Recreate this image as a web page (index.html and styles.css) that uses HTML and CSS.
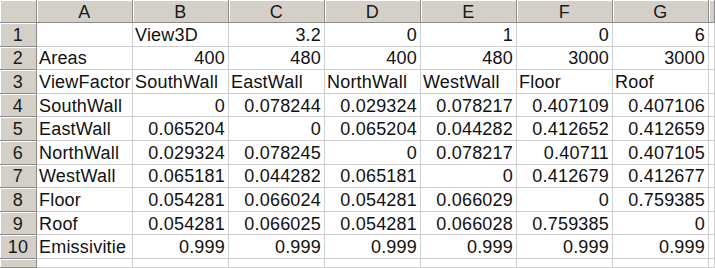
FILE: index.html
```html
<!DOCTYPE html>
<html>
<head>
<meta charset="utf-8">
<link rel="stylesheet" href="styles.css">
</head>
<body>
<div class="sheet">
  <div class="hd corner"></div>
  <div class="hd col">A</div><div class="hd col">B</div><div class="hd col">C</div><div class="hd col">D</div><div class="hd col">E</div><div class="hd col">F</div><div class="hd col">G</div><div class="hd col"></div>

  <div class="hd row">1</div>
  <div class="c t"></div><div class="c t">View3D</div><div class="c n">3.2</div><div class="c n">0</div><div class="c n">1</div><div class="c n">0</div><div class="c n">6</div><div class="c"></div>

  <div class="hd row">2</div>
  <div class="c t">Areas</div><div class="c n">400</div><div class="c n">480</div><div class="c n">400</div><div class="c n">480</div><div class="c n">3000</div><div class="c n">3000</div><div class="c"></div>

  <div class="hd row">3</div>
  <div class="c t">ViewFactor</div><div class="c t">SouthWall</div><div class="c t">EastWall</div><div class="c t">NorthWall</div><div class="c t">WestWall</div><div class="c t">Floor</div><div class="c t">Roof</div><div class="c"></div>

  <div class="hd row">4</div>
  <div class="c t">SouthWall</div><div class="c n">0</div><div class="c n">0.078244</div><div class="c n">0.029324</div><div class="c n">0.078217</div><div class="c n">0.407109</div><div class="c n">0.407106</div><div class="c"></div>

  <div class="hd row">5</div>
  <div class="c t">EastWall</div><div class="c n">0.065204</div><div class="c n">0</div><div class="c n">0.065204</div><div class="c n">0.044282</div><div class="c n">0.412652</div><div class="c n">0.412659</div><div class="c"></div>

  <div class="hd row">6</div>
  <div class="c t">NorthWall</div><div class="c n">0.029324</div><div class="c n">0.078245</div><div class="c n">0</div><div class="c n">0.078217</div><div class="c n">0.40711</div><div class="c n">0.407105</div><div class="c"></div>

  <div class="hd row">7</div>
  <div class="c t">WestWall</div><div class="c n">0.065181</div><div class="c n">0.044282</div><div class="c n">0.065181</div><div class="c n">0</div><div class="c n">0.412679</div><div class="c n">0.412677</div><div class="c"></div>

  <div class="hd row">8</div>
  <div class="c t">Floor</div><div class="c n">0.054281</div><div class="c n">0.066024</div><div class="c n">0.054281</div><div class="c n">0.066029</div><div class="c n">0</div><div class="c n">0.759385</div><div class="c"></div>

  <div class="hd row">9</div>
  <div class="c t">Roof</div><div class="c n">0.054281</div><div class="c n">0.066025</div><div class="c n">0.054281</div><div class="c n">0.066028</div><div class="c n">0.759385</div><div class="c n">0</div><div class="c"></div>

  <div class="hd row">10</div>
  <div class="c t">Emissivitie</div><div class="c n">0.999</div><div class="c n">0.999</div><div class="c n">0.999</div><div class="c n">0.999</div><div class="c n">0.999</div><div class="c n">0.999</div><div class="c"></div>

  <div class="hd row"></div>
  <div class="c"></div><div class="c"></div><div class="c"></div><div class="c"></div><div class="c"></div><div class="c"></div><div class="c"></div><div class="c"></div>
</div>
</body>
</html>
```

FILE: styles.css
```css
html, body {
  margin: 0;
  padding: 0;
  background: #ffffff;
}

.sheet {
  display: grid;
  grid-template-columns: 37px repeat(7, 96px) 1fr;
  grid-template-rows: 23px repeat(10, 23.6px) 1fr;
  width: 715px;
  height: 268px;
  overflow: hidden;
  font-family: "Liberation Sans", Arial, sans-serif;
  font-size: 18px;
  color: #111;
}

.sheet > div {
  box-sizing: border-box;
  white-space: nowrap;
  overflow: hidden;
  display: flex;
  align-items: center;
  line-height: 1;
}

.hd {
  background: #d4d0c8;
  border-right: 1px solid #8c8c8c;
  border-bottom: 1px solid #8c8c8c;
  box-shadow: inset 1px 1px 0 #ffffff;
  justify-content: center;
  color: #1a1a1a;
  padding-top: 1px;
  letter-spacing: 0.3px;
}

.c {
  background: #fff;
  border-right: 1px solid #cfcfcf;
  border-bottom: 1px solid #cfcfcf;
  padding: 1px 3px 0 2px;
  letter-spacing: 0.2px;
}

.n {
  justify-content: flex-end;
}

.t {
  justify-content: flex-start;
}
```
